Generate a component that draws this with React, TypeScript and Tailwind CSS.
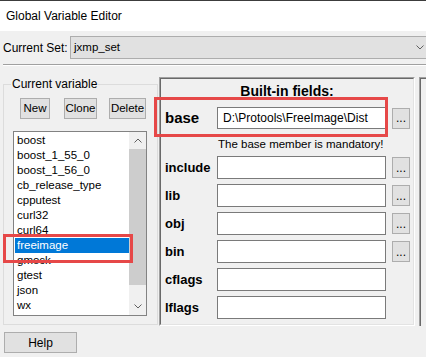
import React from 'react';

const vars = [
  'boost',
  'boost_1_55_0',
  'boost_1_56_0',
  'cb_release_type',
  'cpputest',
  'curl32',
  'curl64',
  'freeimage',
  'gmock',
  'gtest',
  'json',
  'wx',
];

const fields = [
  { name: 'include', browse: true },
  { name: 'lib', browse: true },
  { name: 'obj', browse: true },
  { name: 'bin', browse: true },
  { name: 'cflags', browse: false },
  { name: 'lflags', browse: false },
];

const Chevron: React.FC<{ up?: boolean }> = ({ up }) => (
  <svg width="8" height="5" viewBox="0 0 8 5" className={up ? 'rotate-180' : ''}>
    <path d="M0.5 0.5 L4 4 L7.5 0.5" fill="none" stroke="#606060" strokeWidth="1" />
  </svg>
);

const BrowseButton: React.FC = () => (
  <button className="ml-[6px] w-[18px] h-[21px] shrink-0 bg-[#e1e1e1] border border-[#adadad] text-[12px] leading-none flex items-center justify-center">
    ...
  </button>
);

const App: React.FC = () => {
  return (
    <div className="relative w-[426px] h-[357px] overflow-hidden bg-[#f0f0f0] font-['Liberation_Sans',Arial,sans-serif] text-[11.5px] text-black">
      {/* Title bar */}
      <div className="h-px bg-[#3c3c3c]" />
      <div className="h-[30px] bg-white flex items-center pl-[6px] text-[12px]">Global Variable Editor</div>

      {/* Current set */}
      <div className="flex items-center pt-[5px] pl-[3px]">
        <span className="w-[67px] shrink-0 text-[12px]">Current Set:</span>
        <div className="w-[364px] h-[23px] shrink-0 bg-[#e1e1e1] border border-[#adadad] flex items-center justify-between pl-[3px] pr-[9px]">
          <span>jxmp_set</span>
          <Chevron />
        </div>
      </div>
      <div className="mt-[5px] ml-[3px] h-px bg-[#a0a0a0]" />
      <div className="ml-[3px] h-px bg-white" />

      <div className="flex items-start">
        {/* Current variable group */}
        <fieldset className="ml-[3px] mt-[11px] w-[155px] h-[248px] shrink-0 border border-[#dcdcdc]">
          <legend className="ml-[7px] px-[1px] leading-[14px] text-[12px]">Current variable</legend>
          <div className="flex mt-[7px] ml-[16px]">
            <button className="w-[30px] h-[21px] bg-[#e1e1e1] border border-[#adadad]">New</button>
            <button className="ml-[14px] w-[33px] h-[21px] bg-[#e1e1e1] border border-[#adadad]">Clone</button>
            <button className="ml-[12px] w-[37px] h-[21px] bg-[#e1e1e1] border border-[#adadad]">Delete</button>
          </div>
          <div className="mt-[12px] ml-[9px] w-[134px] h-[185px] border border-[#828282] bg-white flex">
            <div className="flex-1 pt-[1px]">
              {vars.map((v) => (
                <div
                  key={v}
                  className={
                    v === 'freeimage'
                      ? 'h-[15px] leading-[15px] ml-px pl-[2px] bg-[#0078d7] text-white'
                      : 'h-[15px] leading-[15px] ml-px pl-[2px]'
                  }
                >
                  {v}
                </div>
              ))}
            </div>
            <div className="w-[17px] shrink-0 bg-[#f0f0f0] flex flex-col">
              <div className="h-[17px] flex items-center justify-center">
                <Chevron up />
              </div>
              <div className="h-[136px] bg-[#cdcdcd]" />
              <div className="flex-1" />
              <div className="h-[17px] flex items-center justify-center">
                <Chevron />
              </div>
            </div>
          </div>
        </fieldset>

        {/* Built-in fields panel */}
        <div className="mt-[11px] ml-px w-[256px] h-[249px] shrink-0 border border-t-[#a0a0a0] border-l-[#a0a0a0] border-r-white border-b-white">
          <div className="h-full border border-t-[#696969] border-l-[#696969] border-r-[#e3e3e3] border-b-[#e3e3e3] flex flex-col">
            <div className="pt-[4px] text-center font-bold text-[14px] leading-[17px]">Built-in fields:</div>
            <div className="mt-[7px] h-[22px] flex items-center">
              <span className="w-[56px] shrink-0 pl-[4px] font-bold text-[15px]">base</span>
              <div className="w-[169px] h-[22px] shrink-0 bg-white border border-[#7a7a7a] flex items-center pl-[5px] text-[12px]">
                {'D:\\Protools\\FreeImage\\Dist'}
              </div>
              <BrowseButton />
            </div>
            <div className="mt-[7px] leading-[16px] pl-[57px]">The base member is mandatory!</div>
            <div className="mt-[4px] flex flex-col gap-[5px]">
              {fields.map((f) => (
                <div key={f.name} className="h-[23px] flex items-center">
                  <span className="w-[56px] shrink-0 pl-[4px] font-bold text-[13px]">{f.name}</span>
                  <div className="w-[169px] h-[23px] shrink-0 bg-white border border-[#7a7a7a]" />
                  {f.browse && <BrowseButton />}
                </div>
              ))}
            </div>
          </div>
        </div>

        {/* Next panel, cut off */}
        <div className="mt-[11px] ml-[4px] w-[20px] h-[249px] shrink-0 border-t border-l border-[#a0a0a0]">
          <div className="h-full border-t border-l border-[#696969]" />
        </div>
      </div>

      <button className="ml-[4px] mt-[6px] w-[73px] h-[21px] bg-[#e1e1e1] border border-[#adadad] block text-[12px]">Help</button>

      {/* Annotation boxes */}
      <div className="absolute left-[3px] top-[234px] w-[130px] h-[29px] border-[3px] border-[#e64848]" />
      <div className="absolute left-[154px] top-[97px] w-[234px] h-[40px] border-[3px] border-[#e64848]" />
    </div>
  );
};

export default App;
